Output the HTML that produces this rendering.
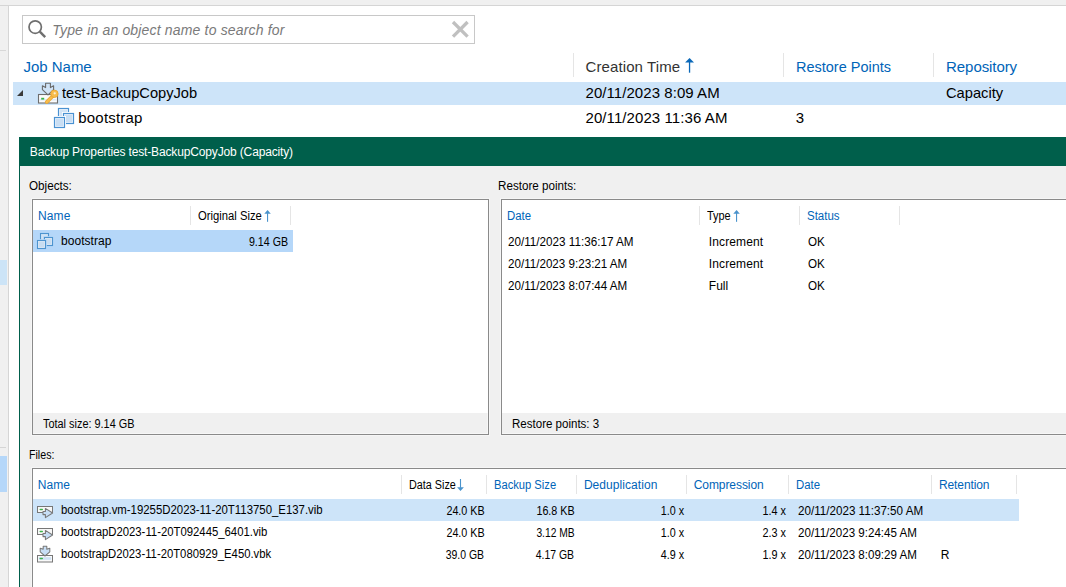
<!DOCTYPE html>
<html><head><meta charset="utf-8"><style>
html,body{margin:0;padding:0;}
body{width:1066px;height:587px;overflow:hidden;position:relative;background:#fff;font-family:"Liberation Sans",sans-serif;}
.a{position:absolute;box-sizing:border-box;}
.t{position:absolute;white-space:pre;}
svg{position:absolute;overflow:visible;}
</style></head><body>
<!-- top & left chrome -->
<div class="a" style="left:0;top:0;width:1066px;height:5px;background:#f0f0f0"></div>
<div class="a" style="left:0;top:5px;width:1066px;height:1px;background:#d5d5d5"></div>
<div class="a" style="left:0;top:6px;width:8px;height:581px;background:#f0f0f0"></div>
<div class="a" style="left:8px;top:6px;width:1px;height:581px;background:#d5d5d5"></div>
<div class="a" style="left:0;top:50px;width:6px;height:1px;background:#d8d8d8"></div>
<div class="a" style="left:0;top:260px;width:7px;height:25px;background:#cce4f7"></div>
<div class="a" style="left:0;top:447px;width:6px;height:1px;background:#d5d5d5"></div>
<div class="a" style="left:0;top:456px;width:7px;height:36px;background:#b5d7f9"></div>
<!-- search -->
<div class="a" style="left:22px;top:15px;width:453px;height:29px;border:1px solid #c8c8c8;background:#fff"></div>
<svg style="left:0;top:0" width="1" height="1">
  <circle cx="35.2" cy="27.1" r="6.2" fill="none" stroke="#6f6f6f" stroke-width="1.7"/>
  <line x1="39.8" y1="31.7" x2="45.2" y2="37.1" stroke="#6f6f6f" stroke-width="2.4"/>
  <line x1="453" y1="22" x2="467.6" y2="36.6" stroke="#c0c0c0" stroke-width="3.3"/>
  <line x1="467.6" y1="22" x2="453" y2="36.6" stroke="#c0c0c0" stroke-width="3.3"/>
</svg>
<!-- tree header separators -->
<div class="a" style="left:573px;top:53px;width:1px;height:24px;background:#e5e5e5"></div>
<div class="a" style="left:783px;top:53px;width:1px;height:24px;background:#e5e5e5"></div>
<div class="a" style="left:933px;top:53px;width:1px;height:24px;background:#e5e5e5"></div>
<svg style="left:0;top:0" width="1" height="1">
  <rect x="688.9" y="61.5" width="1.3" height="11.2" fill="#0a68b8"/>
  <path d="M689.55 58.1 L694 62.6 L685.1 62.6 Z" fill="#0a68b8"/>
</svg>
<!-- tree row highlight -->
<div class="a" style="left:13px;top:82px;width:1053px;height:23px;background:#cde4f9"></div>
<svg style="left:0;top:0" width="1" height="1">
  <path d="M23 90 L23 96 L17 96 Z" fill="#3a3a3a"/>
</svg>
<!-- job icon at 36,82 -->
<svg style="left:36px;top:82px" width="24" height="24" viewBox="0 0 24 24">
  <rect x="2.5" y="12.5" width="19" height="8.5" fill="#fbfbfb" stroke="#6e6e6e" stroke-width="1.1"/>
  <rect x="3.6" y="17.2" width="16.8" height="1.2" fill="#d6e6f6"/>
  <rect x="5.2" y="15.8" width="3" height="1.8" fill="#3bb44a"/>
  <path d="M9.6 1.2 L14.4 1.2 L14.4 5.6 L17.6 3.8 L17.6 7.6 L12 12.8 L6.4 7.6 L6.4 3.8 L9.6 5.6 Z" fill="#cfe3f7" stroke="#6a6a6a" stroke-width="1.1" stroke-linejoin="round"/>
  <path d="M10.8 20 L16.8 14" stroke="#eaa631" stroke-width="3.8" stroke-linecap="round"/>
  <path d="M10.8 20 L16.8 14" stroke="#f7bd4c" stroke-width="2.2" stroke-linecap="round"/>
  <circle cx="18.4" cy="11.8" r="3.7" fill="#f7bd4c" stroke="#eaa631" stroke-width="0.9"/>
  <circle cx="18.7" cy="11.3" r="1.15" fill="#fdf0d4"/>
</svg>
<!-- vm icon 20px at 52,106 -->
<svg style="left:52px;top:106px" width="24" height="24" viewBox="0 0 24 24">
  <rect x="6.5" y="2.5" width="10" height="10" fill="#d3e4f5" stroke="#4a92d2" stroke-width="1.2"/>
  <rect x="7.6" y="3.6" width="7.8" height="7.8" fill="none" stroke="#e6f0fa" stroke-width="0.8"/>
  <rect x="11.5" y="7.5" width="10" height="10" fill="#c9def3" stroke="#ffffff" stroke-width="3"/>
  <rect x="11.5" y="7.5" width="10" height="10" fill="#c9def3" stroke="#4a92d2" stroke-width="1.2"/>
  <rect x="12.6" y="8.6" width="7.8" height="7.8" fill="none" stroke="#e3eefa" stroke-width="0.8"/>
  <rect x="2.5" y="11.5" width="10" height="10" fill="#c9def3" stroke="#ffffff" stroke-width="3"/>
  <rect x="2.5" y="11.5" width="10" height="10" fill="#c9def3" stroke="#4a92d2" stroke-width="1.2"/>
  <rect x="3.6" y="12.6" width="7.8" height="7.8" fill="none" stroke="#e3eefa" stroke-width="0.8"/>
</svg>
<!-- panel -->
<div class="a" style="left:19px;top:137px;width:1047px;height:29px;background:#005f4b"></div>
<div class="a" style="left:19px;top:166px;width:1px;height:421px;background:#005f4b"></div>
<div class="a" style="left:20px;top:166px;width:1046px;height:421px;background:#f0f0f0"></div>
<!-- objects box -->
<div class="a" style="left:32px;top:199px;width:457px;height:236px;border:1px solid #8a8a8a;background:#fff;box-shadow:0 0 0 1px #f6f6f6"></div>
<div class="a" style="left:33px;top:413px;width:455px;height:21px;background:#f0f0f0;border-right:1px solid #f7f7f7;border-bottom:1px solid #f7f7f7"></div>
<div class="a" style="left:190px;top:206px;width:1px;height:19px;background:#e5e5e5"></div>
<div class="a" style="left:290px;top:206px;width:1px;height:19px;background:#e5e5e5"></div>
<div class="a" style="left:33px;top:230px;width:260px;height:22px;background:#b5d7f9"></div>
<svg style="left:34px;top:230px" width="22" height="22" viewBox="0 0 22 22">
  <rect x="6.5" y="3.5" width="8" height="8" fill="#d0e3f5" stroke="#4d94cf" stroke-width="1.1"/>
  <rect x="10.5" y="7.5" width="8" height="8" fill="#c8ddf1" stroke="#b5d7f9" stroke-width="2.6"/>
  <rect x="10.5" y="7.5" width="8" height="8" fill="#c8ddf1" stroke="#4d94cf" stroke-width="1.1"/>
  <rect x="11.5" y="8.5" width="6" height="6" fill="none" stroke="#dde9f5" stroke-width="0.7"/>
  <rect x="3.5" y="10.5" width="8" height="8" fill="#c8ddf1" stroke="#b5d7f9" stroke-width="2.6"/>
  <rect x="3.5" y="10.5" width="8" height="8" fill="#c8ddf1" stroke="#4d94cf" stroke-width="1.1"/>
  <rect x="4.5" y="11.5" width="6" height="6" fill="none" stroke="#dde9f5" stroke-width="0.7"/>
</svg>
<svg style="left:0;top:0" width="1" height="1">
  <rect x="267" y="213" width="1.1" height="8.8" fill="#4a93cc"/>
  <path d="M267.55 210.1 L270.8 213.7 L264.3 213.7 Z" fill="#4a93cc"/>
</svg>
<!-- restore box -->
<div class="a" style="left:501px;top:199px;width:700px;height:236px;border:1px solid #8a8a8a;background:#fff;box-shadow:0 0 0 1px #f6f6f6"></div>
<div class="a" style="left:502px;top:413px;width:600px;height:21px;background:#f0f0f0;border-bottom:1px solid #f7f7f7"></div>
<div class="a" style="left:699px;top:206px;width:1px;height:19px;background:#e5e5e5"></div>
<div class="a" style="left:799px;top:206px;width:1px;height:19px;background:#e5e5e5"></div>
<div class="a" style="left:899px;top:206px;width:1px;height:19px;background:#e5e5e5"></div>
<svg style="left:0;top:0" width="1" height="1">
  <rect x="736" y="213" width="1.1" height="8.8" fill="#4a93cc"/>
  <path d="M736.55 210.1 L739.8 213.7 L733.3 213.7 Z" fill="#4a93cc"/>
</svg>
<!-- files box -->
<div class="a" style="left:32px;top:468px;width:1100px;height:200px;border:1px solid #8a8a8a;background:#fff;box-shadow:0 0 0 1px #f6f6f6"></div>
<div class="a" style="left:401px;top:475px;width:1px;height:19px;background:#e5e5e5"></div>
<div class="a" style="left:486px;top:475px;width:1px;height:19px;background:#e5e5e5"></div>
<div class="a" style="left:576px;top:475px;width:1px;height:19px;background:#e5e5e5"></div>
<div class="a" style="left:686px;top:475px;width:1px;height:19px;background:#e5e5e5"></div>
<div class="a" style="left:788px;top:475px;width:1px;height:19px;background:#e5e5e5"></div>
<div class="a" style="left:931px;top:475px;width:1px;height:19px;background:#e5e5e5"></div>
<div class="a" style="left:1016px;top:475px;width:1px;height:19px;background:#e5e5e5"></div>
<div class="a" style="left:33px;top:499px;width:986px;height:22px;background:#cde4f9"></div>
<svg style="left:0;top:0" width="1" height="1">
  <rect x="459.95" y="479" width="1.1" height="8.8" fill="#4a93cc"/>
  <path d="M457.1 487.2 L463.9 487.2 L460.5 490.9 Z" fill="#4a93cc"/>
</svg>
<!-- file icons -->
<svg style="left:34px;top:500px" width="24" height="24" viewBox="0 0 24 24">
  <rect x="3.5" y="6.5" width="15" height="6" fill="#f7f7f7" stroke="#777" stroke-width="1"/>
  <rect x="5.5" y="8.8" width="3.5" height="1.4" rx="0.7" fill="#3cb44a"/>
  <path d="M9 11.4 H11.4 V8.4 L18.6 13 L11.4 17.6 V14.6 H9 Z" fill="#c7def5" stroke="#787878" stroke-width="1.05" stroke-linejoin="round"/>
</svg>
<svg style="left:34px;top:522px" width="24" height="24" viewBox="0 0 24 24">
  <rect x="3.5" y="6.5" width="15" height="6" fill="#f7f7f7" stroke="#777" stroke-width="1"/>
  <rect x="5.5" y="8.8" width="3.5" height="1.4" rx="0.7" fill="#3cb44a"/>
  <path d="M9 11.4 H11.4 V8.4 L18.6 13 L11.4 17.6 V14.6 H9 Z" fill="#c7def5" stroke="#787878" stroke-width="1.05" stroke-linejoin="round"/>
</svg>
<svg style="left:34px;top:543px" width="24" height="24" viewBox="0 0 24 24">
  <rect x="3.5" y="12.5" width="15" height="6.5" fill="#f9f9f9" stroke="#777" stroke-width="1"/>
  <rect x="4.8" y="14.2" width="12.4" height="2.6" fill="#cfe2f5"/>
  <rect x="5.5" y="14.8" width="3.5" height="1.4" rx="0.7" fill="#3cb44a"/>
  <path d="M9.2 3.3 H12.8 V6.2 L15.8 5.2 V8.8 L11 13 L6.2 8.8 V5.2 L9.2 6.2 Z" fill="#c7def5" stroke="#787878" stroke-width="1.05" stroke-linejoin="round"/>
</svg>

<span class="t" style="top:22px;font-size:14px;line-height:16.8px;color:#7a7a7a;letter-spacing:0.171px;font-style:italic;left:52.30px;">Type in an object name to search for</span>
<span class="t" style="top:58px;font-size:15px;line-height:18.0px;color:#0064b8;letter-spacing:-0.039px;left:23.60px;">Job Name</span>
<span class="t" style="top:58px;font-size:15px;line-height:18.0px;color:#333333;letter-spacing:0.094px;left:585.60px;">Creation Time</span>
<span class="t" style="top:58px;font-size:15px;line-height:18.0px;color:#0064b8;left:796.00px;transform:scaleX(0.9655);transform-origin:0 50%;">Restore Points</span>
<span class="t" style="top:58px;font-size:15px;line-height:18.0px;color:#0064b8;letter-spacing:-0.078px;left:946.10px;">Repository</span>
<span class="t" style="top:84px;font-size:15px;line-height:18.0px;color:#000000;left:61.80px;transform:scaleX(0.9761);transform-origin:0 50%;">test-BackupCopyJob</span>
<span class="t" style="top:84px;font-size:15px;line-height:18.0px;color:#000000;letter-spacing:0.060px;left:585.50px;">20/11/2023 8:09 AM</span>
<span class="t" style="top:84px;font-size:15px;line-height:18.0px;color:#000000;left:945.80px;transform:scaleX(0.9784);transform-origin:0 50%;">Capacity</span>
<span class="t" style="top:109px;font-size:15px;line-height:18.0px;color:#000000;letter-spacing:0.194px;left:78.30px;">bootstrap</span>
<span class="t" style="top:109px;font-size:15px;line-height:18.0px;color:#000000;letter-spacing:0.084px;left:585.50px;">20/11/2023 11:36 AM</span>
<span class="t" style="top:109px;font-size:15px;line-height:18.0px;color:#000000;left:795.80px;">3</span>
<span class="t" style="top:145px;font-size:12px;line-height:14.4px;color:#ffffff;letter-spacing:-0.148px;left:29.80px;">Backup Properties test-BackupCopyJob (Capacity)</span>
<span class="t" style="top:179px;font-size:12px;line-height:14.4px;color:#000000;left:29.30px;transform:scaleX(0.9724);transform-origin:0 50%;">Objects:</span>
<span class="t" style="top:179px;font-size:12px;line-height:14.4px;color:#000000;left:497.90px;transform:scaleX(0.9700);transform-origin:0 50%;">Restore points:</span>
<span class="t" style="top:209px;font-size:12px;line-height:14.4px;color:#0064b8;letter-spacing:0.095px;left:38.10px;">Name</span>
<span class="t" style="top:209px;font-size:12px;line-height:14.4px;color:#000000;left:197.80px;transform:scaleX(0.9378);transform-origin:0 50%;">Original Size</span>
<span class="t" style="top:234px;font-size:12px;line-height:14.4px;color:#000000;letter-spacing:0.032px;left:61.10px;">bootstrap</span>
<span class="t" style="top:235px;font-size:12px;line-height:14.4px;color:#000000;right:777.70px;transform:scaleX(0.8880);transform-origin:100% 50%;">9.14 GB</span>
<span class="t" style="top:417px;font-size:12px;line-height:14.4px;color:#000000;left:43.10px;transform:scaleX(0.9085);transform-origin:0 50%;">Total size: 9.14 GB</span>
<span class="t" style="top:209px;font-size:12px;line-height:14.4px;color:#0064b8;left:507.00px;transform:scaleX(0.9503);transform-origin:0 50%;">Date</span>
<span class="t" style="top:209px;font-size:12px;line-height:14.4px;color:#000000;left:707.10px;transform:scaleX(0.9071);transform-origin:0 50%;">Type</span>
<span class="t" style="top:209px;font-size:12px;line-height:14.4px;color:#0064b8;left:806.50px;transform:scaleX(0.9579);transform-origin:0 50%;">Status</span>
<span class="t" style="top:235px;font-size:12px;line-height:14.4px;color:#000000;left:508.20px;transform:scaleX(0.9736);transform-origin:0 50%;">20/11/2023 11:36:17 AM</span>
<span class="t" style="top:235px;font-size:12px;line-height:14.4px;color:#000000;letter-spacing:0.118px;left:708.80px;">Increment</span>
<span class="t" style="top:235px;font-size:12px;line-height:14.4px;color:#000000;left:808.30px;transform:scaleX(0.9686);transform-origin:0 50%;">OK</span>
<span class="t" style="top:257px;font-size:12px;line-height:14.4px;color:#000000;left:508.20px;transform:scaleX(0.9682);transform-origin:0 50%;">20/11/2023 9:23:21 AM</span>
<span class="t" style="top:257px;font-size:12px;line-height:14.4px;color:#000000;letter-spacing:0.118px;left:708.80px;">Increment</span>
<span class="t" style="top:257px;font-size:12px;line-height:14.4px;color:#000000;left:808.30px;transform:scaleX(0.9686);transform-origin:0 50%;">OK</span>
<span class="t" style="top:279px;font-size:12px;line-height:14.4px;color:#000000;left:508.20px;transform:scaleX(0.9682);transform-origin:0 50%;">20/11/2023 8:07:44 AM</span>
<span class="t" style="top:279px;font-size:12px;line-height:14.4px;color:#000000;left:708.80px;">Full</span>
<span class="t" style="top:279px;font-size:12px;line-height:14.4px;color:#000000;left:808.30px;transform:scaleX(0.9686);transform-origin:0 50%;">OK</span>
<span class="t" style="top:417px;font-size:12px;line-height:14.4px;color:#000000;left:511.70px;transform:scaleX(0.9612);transform-origin:0 50%;">Restore points: 3</span>
<span class="t" style="top:448px;font-size:12px;line-height:14.4px;color:#000000;left:28.70px;transform:scaleX(0.8859);transform-origin:0 50%;">Files:</span>
<span class="t" style="top:478px;font-size:12px;line-height:14.4px;color:#0064b8;letter-spacing:0.095px;left:37.70px;">Name</span>
<span class="t" style="top:478px;font-size:12px;line-height:14.4px;color:#000000;left:408.80px;transform:scaleX(0.8995);transform-origin:0 50%;">Data Size</span>
<span class="t" style="top:478px;font-size:12px;line-height:14.4px;color:#0064b8;left:493.80px;transform:scaleX(0.9310);transform-origin:0 50%;">Backup Size</span>
<span class="t" style="top:478px;font-size:12px;line-height:14.4px;color:#0064b8;letter-spacing:0.065px;left:583.90px;">Deduplication</span>
<span class="t" style="top:478px;font-size:12px;line-height:14.4px;color:#0064b8;letter-spacing:-0.070px;left:693.70px;">Compression</span>
<span class="t" style="top:478px;font-size:12px;line-height:14.4px;color:#0064b8;left:795.80px;transform:scaleX(0.9503);transform-origin:0 50%;">Date</span>
<span class="t" style="top:478px;font-size:12px;line-height:14.4px;color:#0064b8;letter-spacing:-0.109px;left:939.00px;">Retention</span>
<span class="t" style="top:503px;font-size:12px;line-height:14.4px;color:#000000;left:60.70px;transform:scaleX(0.9487);transform-origin:0 50%;">bootstrap.vm-19255D2023-11-20T113750_E137.vib</span>
<span class="t" style="top:504px;font-size:12px;line-height:14.4px;color:#000000;right:581.50px;transform:scaleX(0.8969);transform-origin:100% 50%;">24.0 KB</span>
<span class="t" style="top:504px;font-size:12px;line-height:14.4px;color:#000000;right:491.50px;transform:scaleX(0.8969);transform-origin:100% 50%;">16.8 KB</span>
<span class="t" style="top:504px;font-size:12px;line-height:14.4px;color:#000000;right:382.20px;transform:scaleX(0.8956);transform-origin:100% 50%;">1.0 x</span>
<span class="t" style="top:504px;font-size:12px;line-height:14.4px;color:#000000;right:279.70px;transform:scaleX(0.9033);transform-origin:100% 50%;">1.4 x</span>
<span class="t" style="top:504px;font-size:12px;line-height:14.4px;color:#000000;left:797.60px;transform:scaleX(0.9698);transform-origin:0 50%;">20/11/2023 11:37:50 AM</span>
<span class="t" style="top:525px;font-size:12px;line-height:14.4px;color:#000000;left:60.70px;transform:scaleX(0.9441);transform-origin:0 50%;">bootstrapD2023-11-20T092445_6401.vib</span>
<span class="t" style="top:526px;font-size:12px;line-height:14.4px;color:#000000;right:581.50px;transform:scaleX(0.8969);transform-origin:100% 50%;">24.0 KB</span>
<span class="t" style="top:526px;font-size:12px;line-height:14.4px;color:#000000;right:491.50px;transform:scaleX(0.8568);transform-origin:100% 50%;">3.12 MB</span>
<span class="t" style="top:526px;font-size:12px;line-height:14.4px;color:#000000;right:382.20px;transform:scaleX(0.8956);transform-origin:100% 50%;">1.0 x</span>
<span class="t" style="top:526px;font-size:12px;line-height:14.4px;color:#000000;right:279.70px;transform:scaleX(0.9033);transform-origin:100% 50%;">2.3 x</span>
<span class="t" style="top:526px;font-size:12px;line-height:14.4px;color:#000000;left:797.60px;transform:scaleX(0.9650);transform-origin:0 50%;">20/11/2023 9:24:45 AM</span>
<span class="t" style="top:547px;font-size:12px;line-height:14.4px;color:#000000;left:60.70px;transform:scaleX(0.9414);transform-origin:0 50%;">bootstrapD2023-11-20T080929_E450.vbk</span>
<span class="t" style="top:548px;font-size:12px;line-height:14.4px;color:#000000;right:581.50px;transform:scaleX(0.8698);transform-origin:100% 50%;">39.0 GB</span>
<span class="t" style="top:548px;font-size:12px;line-height:14.4px;color:#000000;right:491.50px;transform:scaleX(0.8698);transform-origin:100% 50%;">4.17 GB</span>
<span class="t" style="top:548px;font-size:12px;line-height:14.4px;color:#000000;right:382.20px;transform:scaleX(0.8956);transform-origin:100% 50%;">4.9 x</span>
<span class="t" style="top:548px;font-size:12px;line-height:14.4px;color:#000000;right:279.70px;transform:scaleX(0.9033);transform-origin:100% 50%;">1.9 x</span>
<span class="t" style="top:548px;font-size:12px;line-height:14.4px;color:#000000;left:797.60px;transform:scaleX(0.9650);transform-origin:0 50%;">20/11/2023 8:09:29 AM</span>
<span class="t" style="top:548px;font-size:12px;line-height:14.4px;color:#000000;left:940.80px;">R</span>
</body></html>
